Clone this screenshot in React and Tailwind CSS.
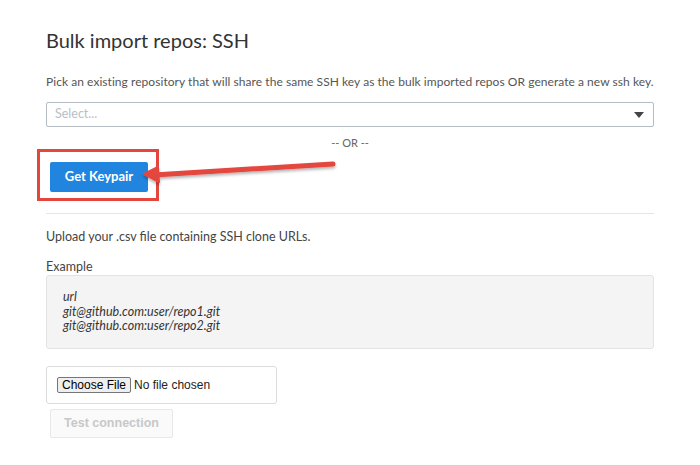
import React from 'react';

const App = () => {
    return (
        <div className="relative w-[700px] h-[465px] bg-white overflow-hidden" style={{ fontFamily: 'Lato, "Noto Sans", sans-serif' }}>
            <div className="px-[46px] pt-[28px]">
                <h1 className="text-[20px] leading-[24px] text-[#333]">Bulk import repos: SSH</h1>

                <p className="mt-[22px] text-[12px] leading-[16px] text-[#555] whitespace-nowrap tracking-[0.05px]">
                    Pick an existing repository that will share the same SSH key as the bulk imported repos OR generate a new ssh key.
                </p>

                {/* select */}
                <div className="mt-[12px] h-[25px] flex items-center justify-between border border-[#b5bcc3] rounded-[2px] pl-[8px] pr-[9px]">
                    <span className="text-[12.5px] text-[#b8c0c8]">Select...</span>
                    <svg width="10" height="6" viewBox="0 0 10 6"><path d="M0 0h10L5 6z" fill="#444" /></svg>
                </div>

                <div className="mt-[9px] text-center text-[11px] leading-[14px] text-[#666]">-- OR --</div>

                <div className="mt-[12px] ml-[4px]">
                    <button className="h-[30px] w-[98px] rounded-[2px] bg-[#2185e0] text-white text-[13px] font-bold">Get Keypair</button>
                </div>

                <div className="mt-[21px] border-t border-[#e6e6e6]" />

                <p className="mt-[15px] text-[12.5px] leading-[16px] text-[#444]">Upload your .csv file containing SSH clone URLs.</p>

                <div className="mt-[14px] text-[12.5px] leading-[16px] text-[#444]">Example</div>

                <div className="mt-[0px] h-[74px] bg-[#f4f4f4] border border-[#e3e3e3] rounded-[3px] pl-[16px] pt-[14px] text-[12.5px] leading-[14.5px] italic text-[#333]">
                    <div>url</div>
                    <div>git@github.com:user/repo1.git</div>
                    <div>git@github.com:user/repo2.git</div>
                </div>

                {/* file input */}
                <div className="mt-[17px] w-[231px] h-[38px] border border-[#dcdcdc] rounded-[3px] flex items-center pl-[10px]" style={{ fontFamily: '"Liberation Sans", Arial, sans-serif' }}>
                    <span className="h-[16px] px-[4px] flex items-center bg-[#efefef] border border-[#767676] rounded-[2px] text-[12px] text-black">Choose File</span>
                    <span className="ml-[3px] text-[12px] text-[#222]">No file chosen</span>
                </div>

                <button className="mt-[5px] ml-[4px] h-[29px] w-[123px] border border-[#e8e8e8] rounded-[2px] bg-[#fafafa] text-[12.5px] font-bold text-[#c8c8c8]" style={{ fontFamily: '"Liberation Sans", Arial, sans-serif' }}>
                    Test connection
                </button>
            </div>

            {/* annotation: red box + arrow */}
            <div className="absolute left-[37px] top-[149px] w-[122px] h-[52px] border-[3px] border-[#e4463e]" />
            <svg className="absolute left-0 top-0 pointer-events-none" width="700" height="465">
                <defs>
                    <filter id="sh" x="-10%" y="-50%" width="120%" height="200%">
                        <feDropShadow dx="0" dy="2" stdDeviation="1.5" floodColor="#000" floodOpacity="0.3" />
                    </filter>
                </defs>
                <g filter="url(#sh)" fill="#e4463e" stroke="#e4463e" strokeLinecap="round" strokeLinejoin="round">
                    <line x1="333" y1="164" x2="154" y2="175" strokeWidth="5" />
                    <path d="M144 174 L158 167 L159 182 Z" strokeWidth="2" />
                </g>
            </svg>
        </div>
    );
};

export default App;
